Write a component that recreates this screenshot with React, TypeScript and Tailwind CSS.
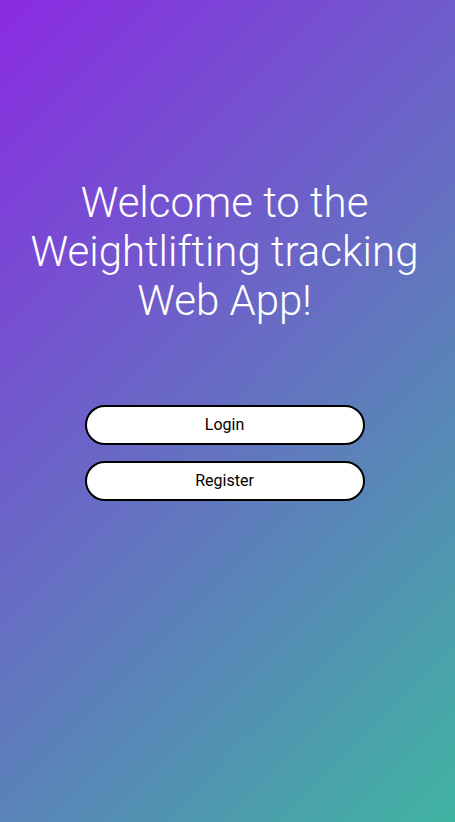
export default function App() {
  return (
    <main className="flex min-h-screen flex-col items-center bg-[linear-gradient(135deg,#8a2be2,#40b4a2)] pl-6 pr-[30px] pt-[178px] font-['Roboto',sans-serif]">
      <h1 className="text-center text-[42px] font-light leading-[49px] text-white">
        Welcome to the
        <br />
        Weightlifting tracking
        <br />
        Web App!
      </h1>
      <div className="mt-[80px] flex w-[280px] flex-col gap-4">
        <button className="h-10 rounded-full border-2 border-black bg-white text-base text-black">
          Login
        </button>
        <button className="h-10 rounded-full border-2 border-black bg-white text-base text-black">
          Register
        </button>
      </div>
    </main>
  );
}
